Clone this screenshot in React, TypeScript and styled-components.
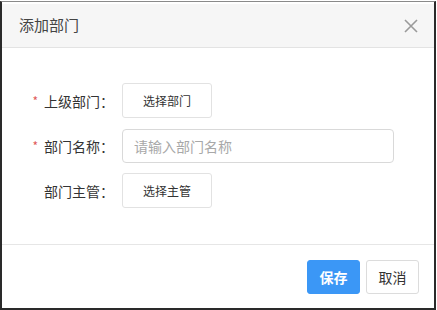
import React from 'react';
import styled, { createGlobalStyle } from 'styled-components';

const Global = createGlobalStyle`
  html, body { margin: 0; padding: 0; background: #fff; }
  body { font-family: "Noto Sans CJK SC", "Liberation Sans", sans-serif; }
`;

const Frame = styled.div`
  box-sizing: border-box;
  width: 436px;
  height: 309px;
  margin-top: 1px;
  border: 2px solid #2a2a2a;
  border-top: 1px solid #8a8a8a;
  display: flex;
  flex-direction: column;
  background: #fff;
`;

const Header = styled.div`
  height: 43px;
  margin-top: 2px;
  background: #f6f6f6;
  border-bottom: 1px solid #e3e3e3;
  display: flex;
  align-items: center;
  justify-content: space-between;
  padding: 0 16px 0 17px;
`;

const Title = styled.div`
  font-size: 15px;
  color: #444;
  margin-top: -2px;
`;

const Close = styled.button`
  border: none;
  background: none;
  padding: 0;
  display: flex;
  cursor: pointer;
`;

const Body = styled.div`
  flex: 1;
  display: flex;
  flex-direction: column;
  gap: 10px;
  padding: 35px 0 0 0;
  border-bottom: 1px solid #e6e6e6;
`;

const Row = styled.div`
  display: flex;
  align-items: center;
  height: 35px;
`;

const Label = styled.div`
  width: 118px;
  display: flex;
  justify-content: flex-end;
  align-items: center;
  font-size: 14px;
  color: #333;
  padding-right: 6px;
  box-sizing: border-box;
`;

const Star = styled.span`
  color: #e05a5a;
  font-size: 12px;
  margin-right: 6px;
`;

const PickButton = styled.button`
  width: 90px;
  height: 35px;
  box-sizing: border-box;
  background: #fff;
  border: 1px solid #e2e2e2;
  border-radius: 3px;
  font-family: inherit;
  font-size: 12px;
  color: #333;
  margin-left: 2px;
`;

const Input = styled.input`
  width: 272px;
  height: 34px;
  box-sizing: border-box;
  border: 1px solid #d9d9d9;
  border-radius: 4px;
  padding: 0 11px;
  font-family: inherit;
  font-size: 14px;
  color: #333;
  margin-left: 2px;
  outline: none;
  &::placeholder { color: #a8a8a8; }
`;

const Footer = styled.div`
  height: 63px;
  display: flex;
  justify-content: flex-end;
  align-items: flex-start;
  gap: 6px;
  padding: 15px 15px 0 0;
  box-sizing: border-box;
`;

const Btn = styled.button<{ primary?: boolean }>`
  width: 53px;
  height: 34px;
  box-sizing: border-box;
  border-radius: 3px;
  font-family: inherit;
  font-size: 14px;
  border: 1px solid ${p => (p.primary ? '#3b97f6' : '#dcdcdc')};
  background: ${p => (p.primary ? '#3b97f6' : '#fff')};
  color: ${p => (p.primary ? '#fff' : '#333')};
  font-weight: ${p => (p.primary ? 700 : 400)};
`;

export default function App() {
  return (
    <>
      <Global />
      <Frame>
        <Header>
          <Title>添加部门</Title>
          <Close>
            <svg width="14" height="14" viewBox="0 0 14 14">
              <path d="M1 1L13 13M13 1L1 13" stroke="#9a9a9a" strokeWidth="1.6" />
            </svg>
          </Close>
        </Header>
        <Body>
          <Row>
            <Label><Star>*</Star>上级部门：</Label>
            <PickButton>选择部门</PickButton>
          </Row>
          <Row>
            <Label><Star>*</Star>部门名称：</Label>
            <Input placeholder="请输入部门名称" />
          </Row>
          <Row>
            <Label>部门主管：</Label>
            <PickButton>选择主管</PickButton>
          </Row>
        </Body>
        <Footer>
          <Btn primary>保存</Btn>
          <Btn>取消</Btn>
        </Footer>
      </Frame>
    </>
  );
}
